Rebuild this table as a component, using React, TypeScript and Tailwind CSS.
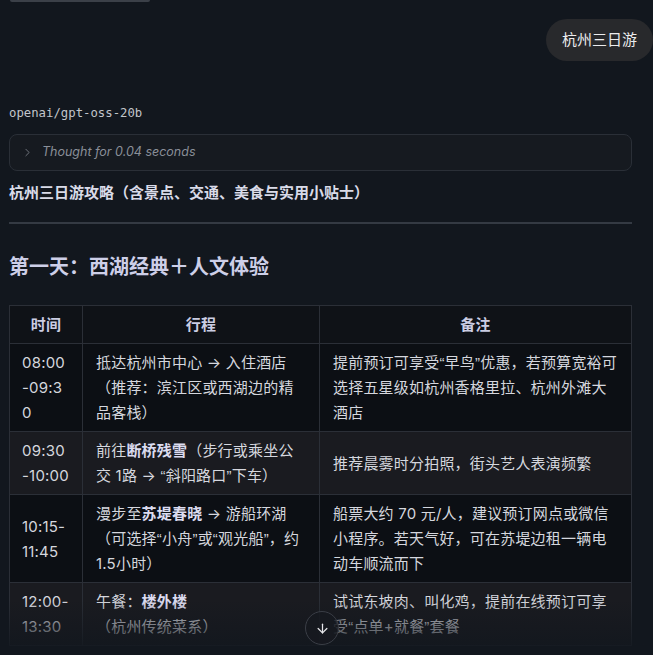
import { ArrowDown, ChevronRight } from "lucide-react";

type Row = {
  time: string;
  plan: React.ReactNode;
  note: string;
};

// curly quotes in the shot are the narrow latin ones
function Q({ children }: { children: string }) {
  return <span className="font-['Liberation_Sans',sans-serif]">{children}</span>;
}

function withQuotes(text: string) {
  return text.split(/([“”])/).map((part, i) => (part === "“" || part === "”" ? <Q key={i}>{part}</Q> : part));
}

const ROWS: Row[] = [
  {
    time: "08:00 -09:30",
    plan: <>抵达杭州市中心 → 入住酒店（推荐：滨江区或西湖边的精品客栈）</>,
    note: "提前预订可享受“早鸟”优惠，若预算宽裕可选择五星级如杭州香格里拉、杭州外滩大酒店",
  },
  {
    time: "09:30 -10:00",
    plan: (
      <>
        前往<b className="font-bold text-[#dcdcf0]">断桥残雪</b>（步行或乘坐公交 1路 → <Q>“</Q>斜阳路口<Q>”</Q>下车）
      </>
    ),
    note: "推荐晨雾时分拍照，街头艺人表演频繁",
  },
  {
    time: "10:15-11:45",
    plan: (
      <>
        漫步至<b className="font-bold text-[#dcdcf0]">苏堤春晓</b> → 游船环湖（可选择<Q>“</Q>小舟<Q>”</Q>或<Q>“</Q>观光船<Q>”</Q>，约 1.5小时）
      </>
    ),
    note: "船票大约 70 元/人，建议预订网点或微信小程序。若天气好，可在苏堤边租一辆电动车顺流而下",
  },
  {
    time: "12:00-13:30",
    plan: (
      <>
        午餐：<b className="font-bold text-[#dcdcf0]">楼外楼</b>（杭州传统菜系）
      </>
    ),
    note: "试试东坡肉、叫化鸡，提前在线预订可享受“点单+就餐”套餐",
  },
];

const FONT = "font-['Inter','Noto_Sans_CJK_SC',sans-serif]";

export default function App() {
  return (
    <div className={`relative h-[655px] w-full overflow-hidden bg-[#12171e] ${FONT}`}>
      {/* bottom edge of the box above, scrolled out */}
      <div className="ml-[10px] h-[2px] w-[140px] rounded-b bg-[#3b4048]" />

      {/* user message */}
      <div className="mt-[17px] flex justify-end">
        <div className="flex h-[42px] items-center rounded-[21px] bg-[#28292c] px-[16px] text-[15px] text-[#ececee]">
          杭州三日游
        </div>
      </div>

      {/* assistant */}
      <div className="pl-[9px] pr-[21px]">
        <div className="mt-[44px] font-['DejaVu_Sans_Mono',monospace] text-[12.3px] leading-[16px] text-[#c2c5cb]">
          openai/gpt-oss-20b
        </div>

        <div className="mt-[13px] flex h-[37px] items-center gap-[8px] rounded-[8px] border border-[#2a2f37] bg-[#161a20] px-[11px]">
          <ChevronRight size={13} strokeWidth={1.5} className="text-[#80858e]" />
          <span className="text-[12.5px] italic text-[#8a8f98]">Thought for 0.04 seconds</span>
        </div>

        <p className="mt-[11px] text-[15px] font-bold leading-[22px] text-[#d9dbe8]">
          杭州三日游攻略（含景点、交通、美食与实用小贴士）
        </p>

        <div className="mt-[18px] h-[2px] bg-[#343a43]" />

        <h2 className="mt-[29px] text-[20px] font-bold leading-[28px] text-[#cdcfe8]">
          第一天：西湖经典＋人文体验
        </h2>

        <table className="mt-[24px] w-full table-fixed border-collapse text-[15px] leading-[25px] tracking-[0.2px] text-[#d5d7de]">
          <colgroup>
            <col className="w-[73px]" />
            <col className="w-[237px]" />
            <col />
          </colgroup>
          <thead>
            <tr className="bg-[#0f1217]">
              {["时间", "行程", "备注"].map((h) => (
                <th
                  key={h}
                  className="border border-[#2b2f37] px-[13px] py-[6px] text-center font-bold text-[#cbcde3]"
                >
                  {h}
                </th>
              ))}
            </tr>
          </thead>
          <tbody>
            {ROWS.map((r, i) => (
              <tr key={r.time} className={i % 2 === 0 ? "bg-[#0c0f14]" : "bg-[#1a1b20]"}>
                <td className="border border-[#2b2f37] px-[12px] py-[6px] align-middle [overflow-wrap:anywhere]">
                  {r.time}
                </td>
                <td className="border border-[#2b2f37] px-[13px] py-[6px] align-middle">{r.plan}</td>
                <td className="border border-[#2b2f37] px-[13px] py-[6px] align-middle">{withQuotes(r.note)}</td>
              </tr>
            ))}
          </tbody>
        </table>
      </div>

      {/* fade at bottom of scroll area */}
      <div className="pointer-events-none absolute inset-x-0 bottom-0 h-[55px] bg-gradient-to-b from-transparent to-[#12171e]" />

      {/* scroll-to-bottom */}
      <button className="absolute bottom-[10px] left-[305px] flex h-[34px] w-[34px] items-center justify-center rounded-full border border-[#3a3e46] bg-[#16191f]/80 text-[#e6e7ea]">
        <ArrowDown size={15} strokeWidth={2} />
      </button>
    </div>
  );
}
